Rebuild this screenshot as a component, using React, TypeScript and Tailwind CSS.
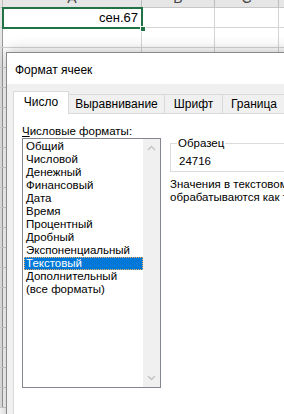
import { type ReactNode } from 'react';

const formats = [
    'Общий',
    'Числовой',
    'Денежный',
    'Финансовый',
    'Дата',
    'Время',
    'Процентный',
    'Дробный',
    'Экспоненциальный',
    'Текстовый',
    'Дополнительный',
    '(все форматы)',
];

const rows = Array.from({ length: 20 }, (_, i) => i);

function Cell({ w, children }: { w: string; children?: ReactNode }) {
    return (
        <div className={`${w} h-full shrink-0 border-r border-[#d4d4d4] flex items-center justify-end pr-[3px]`}>
            {children}
        </div>
    );
}

function Chevron({ up }: { up?: boolean }) {
    return (
        <svg width="9" height="6" viewBox="0 0 9 6" className="block">
            <path
                d={up ? 'M1 5 L4.5 1.5 L8 5' : 'M1 1 L4.5 4.5 L8 1'}
                fill="none"
                stroke="#c2c2c2"
                strokeWidth="1.3"
            />
        </svg>
    );
}

export default function App() {
    return (
        <div className="relative w-[284px] h-[414px] overflow-hidden bg-white">
            {/* Лист */}
            <div className="font-['Liberation_Sans',sans-serif] text-[13px] text-black">
                <div className="flex h-[8px] bg-[#e6e6e6] border-b border-[#c6c6c6] overflow-hidden text-[14px] text-[#444]">
                    <div className="w-[3px] shrink-0 border-r border-[#bdbdbd]" />
                    <div className="w-[139px] shrink-0 border-r border-[#bdbdbd] text-center leading-[20px] -mt-[12px]">A</div>
                    <div className="w-[73px] shrink-0 border-r border-[#bdbdbd] text-center leading-[20px] -mt-[12px]">B</div>
                    <div className="w-[64px] shrink-0 border-r border-[#bdbdbd] text-center leading-[20px] -mt-[12px]">C</div>
                    <div className="flex-1" />
                </div>
                {rows.map((r) => (
                    <div key={r} className="flex h-[20px] border-b border-[#d4d4d4]">
                        <div className="w-[3px] shrink-0 bg-[#e6e6e6] border-r border-[#9b9b9b]" />
                        <Cell w="w-[139px]">{r === 0 ? 'сен.67' : null}</Cell>
                        <Cell w="w-[73px]" />
                        <Cell w="w-[64px]" />
                        <div className="flex-1" />
                    </div>
                ))}
            </div>

            {/* Выделенная ячейка */}
            <div className="absolute left-[2px] top-[7px] w-[141px] h-[22px] border-2 border-[#217346]" />
            <div className="absolute left-[140px] top-[26px] w-[6px] h-[6px] bg-[#217346] border border-white" />

            {/* Диалог */}
            <div className="absolute left-[6px] top-[52px] w-[300px] h-[380px] bg-white border border-[#8a8a8a] shadow-[0_0_14px_rgba(0,0,0,0.28)] font-['Liberation_Sans',sans-serif] text-[11.5px] text-black flex flex-col">
                <div className="h-[31px] pl-[8px] pt-[2px] flex items-center text-[12px]">Формат ячеек</div>

                <div className="flex-1 bg-[#f0f0f0] pl-[6px] pt-[7px] flex flex-col">
                    {/* Вкладки */}
                    <div className="flex items-end h-[22px] text-[12px]">
                        <div className="relative z-10 w-[56px] h-[23px] -mb-px bg-white border-l border-t border-r border-[#d9d9d9] flex items-center justify-center pb-[2px]">
                            Число
                        </div>
                        <div className="w-[96px] h-[19px] border-t border-r border-[#d9d9d9] flex items-center justify-center">
                            Выравнивание
                        </div>
                        <div className="w-[58px] h-[19px] border-t border-r border-[#d9d9d9] flex items-center justify-center">
                            Шрифт
                        </div>
                        <div className="w-[63px] h-[19px] border-t border-r border-[#d9d9d9] flex items-center justify-center">
                            Граница
                        </div>
                    </div>

                    <div className="flex-1 bg-white border-t border-l border-[#d9d9d9] pl-[8px] pt-[9px]">
                        <div className="leading-[16px] h-[16px]">
                            <u>Ч</u>исловые форматы:
                        </div>
                        <div className="flex mt-[-1px]">
                            {/* Список */}
                            <div className="w-[139px] h-[250px] shrink-0 border border-[#828790] flex">
                                <div className="flex-1 pt-px pl-px">
                                    {formats.map((f) => (
                                        <div
                                            key={f}
                                            className={
                                                f === 'Текстовый'
                                                    ? 'h-[13px] leading-[13px] pl-[2px] bg-[#0078d7] text-white outline-1 outline-dotted outline-[#f0b060] -outline-offset-1 whitespace-nowrap'
                                                    : 'h-[13px] leading-[13px] pl-[2px] whitespace-nowrap'
                                            }
                                        >
                                            {f}
                                        </div>
                                    ))}
                                </div>
                                <div className="w-[17px] bg-[#f0f0f0] flex flex-col items-center justify-between py-[6px]">
                                    <Chevron up />
                                    <Chevron />
                                </div>
                            </div>

                            {/* Образец */}
                            <div className="ml-[9px] flex-1 min-w-0">
                                <fieldset className="border border-[#dcdcdc] h-[36px] mt-[-2px] pl-[8px] pr-0 pb-0">
                                    <legend className="px-px ml-[-2px] leading-[14px]">Образец</legend>
                                    <div className="leading-[16px] pt-[3px]">24716</div>
                                </fieldset>
                                <div className="mt-[6px] leading-[13px] whitespace-nowrap">
                                    <div>Значения в текстовом формате</div>
                                    <div>обрабатываются как текст даже</div>
                                </div>
                            </div>
                        </div>
                    </div>
                </div>
            </div>
        </div>
    );
}
